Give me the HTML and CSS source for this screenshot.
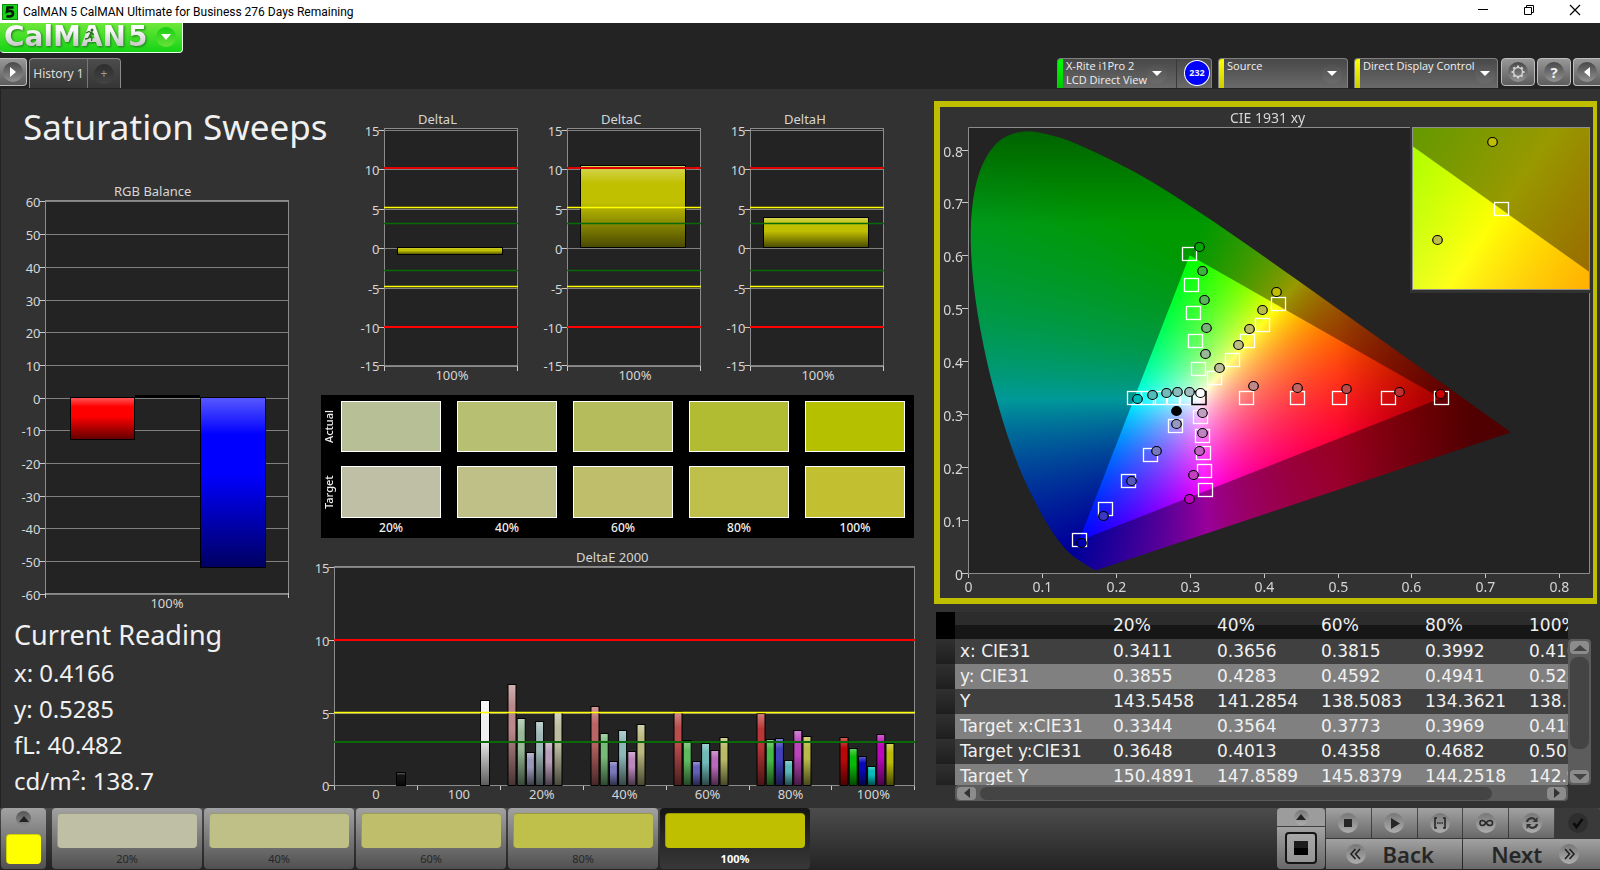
FILE: index.html
```html
<!DOCTYPE html>
<html lang="en">
<head>
<meta charset="utf-8">
<title>CalMAN 5</title>
<link rel="stylesheet" href="styles.css">
</head>
<body>
<header class="titlebar">
  <svg class="app-icon" viewBox="0 0 16 16" aria-hidden="true"><rect width="16" height="16" fill="#0a8f0a"/><rect x="1" y="1" width="14" height="14" fill="#19d219"/><path d="M11.5 3.5H5.5L5 7.5C7 6.500 11 6.500 11 9.500C11 12.500 7 13 4.500 12" fill="none" stroke="#021a02" stroke-width="2.600"/></svg>
  <span class="window-title">CalMAN 5 CalMAN Ultimate for Business 276 Days Remaining</span>
  <div class="window-controls">
    <button class="win-btn" aria-label="Minimize"><svg width="12" height="12"><path d="M1 5.5H11" stroke="#000"/></svg></button>
    <button class="win-btn" aria-label="Restore"><svg width="12" height="12"><path d="M1.5 3.500H8.500V10.500H1.500ZM3.500 3.500V1.500H10.500V8.500H8.500" fill="none" stroke="#000"/></svg></button>
    <button class="win-btn" aria-label="Close"><svg width="12" height="12"><path d="M1 1L11 11M11 1L1 11" stroke="#000" stroke-width="1.200"/></svg></button>
  </div>
</header>

<div class="topbar">
  <button class="logo" aria-label="CalMAN 5 menu"><span class="logo-text">CalMAN</span><span class="logo-text logo-five">5</span><span class="logo-drop"><svg width="12" height="8"><path d="M1 1H11L6 7Z" fill="#fff"/></svg></span>
    <svg class="runner" viewBox="0 0 12 14" aria-hidden="true"><circle cx="8" cy="2" r="1.500" fill="#2a6a20"/><path d="M2 5L5 3.500L7.500 5L10 6.500M7 4.500L5.500 8L8 10L7.500 13M5.500 8L4 10.500L1 11" fill="none" stroke="#2a6a20" stroke-width="1.300"/></svg>
  </button>
  <div class="tabrow">
    <button class="grey-btn play-btn" aria-label="Expand"><span class="knob"><svg width="8" height="12"><path d="M1 1L7 6L1 11Z" fill="#fff"/></svg></span></button>
    <div class="history">
      <button class="tab">History 1</button>
      <button class="tab tab-add" aria-label="Add tab"><span class="knob knob-dark">+</span></button>
    </div>
    <div class="devices">
      <div class="device device-meter"><i class="flag flag-green"></i><span class="device-name">X-Rite i1Pro 2<br>LCD Direct View</span><button class="knob knob-drop" aria-label="Meter menu"><svg width="12" height="8"><path d="M1 1H11L6 6Z" fill="#fff"/></svg></button><i class="device-split"></i><span class="count">232</span></div>
      <div class="device device-source"><i class="flag"></i><span class="device-name">Source</span><button class="knob knob-drop" aria-label="Source menu"><svg width="12" height="8"><path d="M1 1H11L6 6Z" fill="#fff"/></svg></button></div>
      <div class="device device-display"><i class="flag"></i><span class="device-name">Direct Display Control</span><button class="knob knob-drop" aria-label="Display menu"><svg width="12" height="8"><path d="M1 1H11L6 6Z" fill="#fff"/></svg></button></div>
      <button class="grey-btn" aria-label="Settings"><span class="knob"><svg width="16" height="16" viewBox="0 0 16 16"><circle cx="8" cy="8" r="4.500" fill="none" stroke="#d0d0d0" stroke-width="1.500"/><path d="M8 1.500V3.500M8 12.500V14.500M1.500 8H3.500M12.500 8H14.500M3.400 3.400L4.800 4.800M11.200 11.200L12.600 12.600M12.600 3.400L11.200 4.800M4.800 11.200L3.400 12.600" stroke="#d0d0d0" stroke-width="2.200"/></svg></span></button>
      <button class="grey-btn" aria-label="Help"><span class="knob knob-help">?</span></button>
      <button class="grey-btn collapse-btn" aria-label="Collapse"><span class="knob"><svg width="8" height="12"><path d="M7 1L1 6L7 11Z" fill="#fff"/></svg></span></button>
    </div>
  </div>
</div>

<main class="workspace">
  <section class="col-left">
    <h1 class="page-title">Saturation Sweeps</h1>
    <svg class="chart" id="rgb" viewBox="0 180 320 435" role="img" aria-label="RGB Balance"></svg>
    <div class="reading">
      <h2>Current Reading</h2>
      <p>x: 0.4166</p>
      <p>y: 0.5285</p>
      <p>fL: 40.482</p>
      <p>cd/m²: 138.7</p>
    </div>
  </section>

  <section class="col-mid">
    <div class="deltas">
      <svg class="chart" id="deltaL" viewBox="335 105 183 285" role="img" aria-label="DeltaL"></svg>
      <svg class="chart" id="deltaC" viewBox="335 105 183 285" role="img" aria-label="DeltaC"></svg>
      <svg class="chart" id="deltaH" viewBox="335 105 183 285" role="img" aria-label="DeltaH"></svg>
    </div>
    <div class="swatches">
      <span class="side">Actual</span>
      <i class="sw a20"></i><i class="sw a40"></i><i class="sw a60"></i><i class="sw a80"></i><i class="sw a100"></i>
      <span class="side">Target</span>
      <i class="sw t20"></i><i class="sw t40"></i><i class="sw t60"></i><i class="sw t80"></i><i class="sw t100"></i>
      <span></span><b>20%</b><b>40%</b><b>60%</b><b>80%</b><b>100%</b>
    </div>
    <svg class="chart chart-de" id="deltaE" viewBox="320 545 600 263" role="img" aria-label="DeltaE 2000"></svg>
  </section>

  <section class="col-right">
    <div class="cie">
      <canvas class="cie-fill" id="cieFill" width="1306" height="982"></canvas>
      <svg class="chart cie-chart" id="cie" viewBox="940 107 653 491" role="img" aria-label="CIE 1931 xy"></svg>
    </div>
    <div class="grid-box">
      <div class="grid-view">
        <table>
          <thead><tr><th class="rowhead"></th><th class="name"></th><th>20%</th><th>40%</th><th>60%</th><th>80%</th><th>100%</th></tr></thead>
          <tbody>
            <tr><td class="rowhead"></td><td>x: CIE31</td><td>0.3411</td><td>0.3656</td><td>0.3815</td><td>0.3992</td><td>0.4166</td></tr>
            <tr><td class="rowhead"></td><td>y: CIE31</td><td>0.3855</td><td>0.4283</td><td>0.4592</td><td>0.4941</td><td>0.5285</td></tr>
            <tr><td class="rowhead"></td><td>Y</td><td>143.5458</td><td>141.2854</td><td>138.5083</td><td>134.3621</td><td>138.7000</td></tr>
            <tr><td class="rowhead"></td><td>Target x:CIE31</td><td>0.3344</td><td>0.3564</td><td>0.3773</td><td>0.3969</td><td>0.4193</td></tr>
            <tr><td class="rowhead"></td><td>Target y:CIE31</td><td>0.3648</td><td>0.4013</td><td>0.4358</td><td>0.4682</td><td>0.5053</td></tr>
            <tr><td class="rowhead"></td><td>Target Y</td><td>150.4891</td><td>147.8589</td><td>145.8379</td><td>144.2518</td><td>142.9000</td></tr>
          </tbody>
        </table>
      </div>
      <div class="vbar">
        <button class="sbtn" aria-label="Scroll up"><svg width="16" height="8"><path d="M1 7H15L8 1Z" fill="#444"/></svg></button>
        <i class="vthumb"></i>
        <button class="sbtn" aria-label="Scroll down"><svg width="16" height="8"><path d="M1 1H15L8 7Z" fill="#444"/></svg></button>
      </div>
      <div class="hbar">
        <button class="sbtn" aria-label="Scroll left"><svg width="8" height="12"><path d="M7 1V11L1 6Z" fill="#333"/></svg></button>
        <i class="hthumb"></i>
        <button class="sbtn" aria-label="Scroll right"><svg width="8" height="12"><path d="M1 1V11L7 6Z" fill="#333"/></svg></button>
      </div>
    </div>
  </section>
</main>

<footer class="bottombar">
  <button class="patch patch-current" aria-label="Current colour"><span class="knob-mini"><svg width="10" height="6"><path d="M5 0L10 6H0Z" fill="#222"/></svg></span><i class="patch-color yellow"></i></button>
  <button class="patch"><i class="patch-color t20"></i>20%</button>
  <button class="patch"><i class="patch-color t40"></i>40%</button>
  <button class="patch"><i class="patch-color t60"></i>60%</button>
  <button class="patch"><i class="patch-color t80"></i>80%</button>
  <button class="patch patch-on"><i class="patch-color full"></i>100%</button>
  <div class="controls">
    <div class="mode">
      <button class="ctl mode-up" aria-label="Mode menu"><span class="knob-lite knob-small"><svg width="10" height="6"><path d="M5 0L10 6H0Z" fill="#222"/></svg></span></button>
      <button class="ctl mode-box" aria-label="Pattern window"><i class="pattern"></i></button>
    </div>
    <div class="transport">
      <button class="ctl" aria-label="Stop"><span class="knob-lite"><svg width="20" height="20"><path d="M6 6H14V14H6Z" fill="#262626"/></svg></span></button>
      <button class="ctl" aria-label="Play"><span class="knob-lite"><svg width="20" height="20"><path d="M7 5L16 10.500L7 16Z" fill="#262626"/></svg></span></button>
      <button class="ctl" aria-label="Read series"><span class="knob-lite"><svg width="20" height="20"><path d="M7 5H5V15H7M13 5H15V15H13" fill="none" stroke="#262626" stroke-width="1.600"/><path d="M7 10H13" stroke="#262626" stroke-width="1.600" stroke-dasharray="1.500 .7"/></svg></span></button>
      <button class="ctl" aria-label="Continuous"><span class="knob-lite"><svg width="20" height="20"><path d="M10 10C8 7 4 6.500 4 10C4 13.500 8 13 10 10C12 7 16.500 6.500 16.500 10C16.500 13.500 12 13 10 10Z" fill="none" stroke="#262626" stroke-width="1.600"/></svg></span></button>
      <button class="ctl" aria-label="Refresh"><span class="knob-lite"><svg width="20" height="20"><path d="M5 9C5.500 5.500 10 4 13 6.500M15 11C14.500 14.500 10 16 7 13.500" fill="none" stroke="#333" stroke-width="2.200"/><path d="M15.500 4V9H10.500ZM4.500 16V11H9.500Z" fill="#333"/></svg></span></button>
      <button class="ctl ctl-off" aria-label="Accept"><span class="knob-lite knob-off"><svg width="20" height="20"><path d="M5.500 10L8.500 14L14.500 6" fill="none" stroke="#0c0c0c" stroke-width="2.800"/></svg></span></button>
      <button class="ctl nav nav-back"><span class="knob-lite"><svg width="20" height="20"><path d="M9.500 5L5 10L9.500 15M14 5L9.500 10L14 15" fill="none" stroke="#222" stroke-width="1.600"/></svg></span>Back</button>
      <button class="ctl nav nav-next">Next<span class="knob-lite"><svg width="20" height="20"><path d="M6 5L10.500 10L6 15M10.500 5L15 10L10.500 15" fill="none" stroke="#222" stroke-width="1.600"/></svg></span></button>
    </div>
  </div>
</footer>
<script src="charts.js"></script>
</body>
</html>
```
FILE: styles.css
```css
* { box-sizing: border-box; }
body {
  margin: 0;
  min-height: 100vh;
  display: flex;
  flex-direction: column;
  background: #323232;
  color: #f0f0f0;
  font-family: "Noto Sans", "Open Sans", sans-serif;
  font-size: 13px;
}
button {
  border: 0;
  padding: 0;
  margin: 0;
  background: none;
  color: inherit;
  font: inherit;
  display: flex;
  align-items: center;
  justify-content: center;
}
i { font-style: normal; display: block; }
svg { display: block; }

.titlebar {
  height: 23px;
  display: flex;
  align-items: center;
  background: #fff;
  color: #000;
  padding-left: 2px;
}
.app-icon { width: 16px; height: 16px; }
.window-title { margin-left: 5px; font-size: 12px; line-height: 16px; font-family: Roboto, "Open Sans", sans-serif; }
.window-controls { margin-left: auto; display: flex; padding-right: 2px; }
.win-btn { width: 46px; height: 23px; padding-bottom: 3px; }

.topbar { background: #232323; height: 66px; display: flex; flex-direction: column; }
.logo {
  position: relative;
  width: 183px;
  height: 30px;
  justify-content: flex-start;
  padding: 0 0 2px 4px;
  background: linear-gradient(#6fe83a, #14d414);
  border: 1px solid #eaffea;
  border-top: 0;
  border-left: 0;
  border-radius: 0 0 4px 4px;
}
.logo-text {
  font-family: "DejaVu Sans", sans-serif;
  font-weight: 700;
  font-size: 28px;
  line-height: 28px;
  background: linear-gradient(#ffffff 20%, #c4c4c4 85%);
  background-clip: text;
  color: transparent;
  filter: drop-shadow(1px 1px 1px #1b7a1b);
}
.logo-five { margin-left: 2px; }
.runner { position: absolute; left: 84px; top: 5px; width: 12px; height: 14px; }
.logo-drop {
  display: flex;
  align-items: center;
  justify-content: center;
  width: 20px;
  height: 20px;
  margin-left: 8px;
  border-radius: 50%;
  background: linear-gradient(#13cf13, #6ae23a);
}
.tabrow { display: flex; padding-top: 5px; }
.grey-btn {
  width: 34px;
  height: 28px;
  background: linear-gradient(#989898, #5c5c5c);
  border: 1px solid #bdbdbd;
  border-radius: 4px;
}
.play-btn { width: 27px; border-left: 0; border-radius: 0 4px 4px 0; }
.knob {
  display: flex;
  align-items: center;
  justify-content: center;
  width: 20px;
  height: 20px;
  border-radius: 50%;
  background: linear-gradient(#484848, #929292);
}
.knob-dark { background: linear-gradient(#2d2d2d, #454545); color: #9a9a9a; font-size: 12px; }
.knob-help { font-weight: 700; font-size: 15px; color: #eee; }
.history {
  display: flex;
  height: 30px;
  margin-left: 2px;
  border: 1px solid #8a8a8a;
  border-bottom: 0;
  border-radius: 4px 4px 0 0;
  background: linear-gradient(#4c4c4c, #363636);
}
.tab { width: 57px; font-size: 12px; color: #dcdcdc; }
.tab-add { width: 33px; border-left: 1px solid #777; }
.devices { margin-left: auto; display: flex; gap: 2px; }
.device {
  display: flex;
  height: 30px;
  margin-right: 4px;
  background: linear-gradient(#484848, #6a6a6a);
  border: 1px solid #808080;
  border-bottom: 0;
  border-radius: 4px 4px 0 0;
  overflow: hidden;
}
.device-meter { width: 155px; margin-right: 4px; }
.device-source { width: 130px; }
.device-display { width: 144px; margin-right: 1px; }
.flag { flex: none; width: 5px; background: linear-gradient(#ffff00, #cccc00); }
.flag-green { background: linear-gradient(#00ff00, #00c800); }
.device-name {
  padding-left: 3px;
  font-family: "Open Sans", sans-serif;
  font-size: 11px;
  line-height: 14px;
  white-space: nowrap;
}
.knob-drop { flex: none; width: 20px; margin: 5px 5px 0 auto; background: linear-gradient(#505050, #6c6c6c); }
.device-meter .knob-drop { margin-right: 9px; }
.device-split { width: 1px; background: #3a3a3a; }
.count {
  width: 26px;
  height: 26px;
  margin: 1px 1px 0 7px;
  border: 1px solid #fff;
  border-radius: 50%;
  background: #0000ff;
  font-size: 9px;
  font-weight: 700;
  line-height: 24px;
  text-align: center;
}
.collapse-btn { border-right: 0; border-radius: 4px 0 0 4px; width: 27px; }

.workspace {
  flex: 1;
  display: grid;
  grid-template-columns: 320fr 600fr 680fr;
  box-shadow: inset 1px 0 #232323;
  align-items: start;
}
.workspace > section { min-width: 0; }
.chart { width: 100%; height: auto; overflow: visible; }
.chart text { font-size: 13px; fill: #d6d6d6; }
.cie-chart .tick { font-size: 14px; }
.page-title {
  margin: 0;
  padding: 16px 0 31px 23px;
  font-size: 35px;
  font-weight: 400;
  line-height: 44px;
  white-space: nowrap;
}
.reading { padding: 0 0 0 14px; }
.reading h2 { margin: 0; font-size: 27px; font-weight: 400; line-height: 40px; }
.reading p { margin: 0; font-size: 24px; line-height: 36px; }

.deltas { display: grid; grid-template-columns: repeat(3, 1fr); padding: 16px 36px 5px 15px; }
.swatches {
  display: grid;
  grid-template-columns: 4px repeat(5, 1fr);
  grid-template-rows: 51px 52px 16px;
  gap: 14px 16px;
  height: 143px;
  margin: 0 6px 7px 1px;
  padding: 6px 9px 0 0;
  background: #000;
}
.swatches b { font-size: 12px; font-weight: 500; line-height: 16px; text-align: center; margin-top: -12px; }
.side { width: 16px; font-size: 11px; font-weight: 500; line-height: 16px; text-align: center; writing-mode: vertical-rl; transform: rotate(180deg); }
.sw { border: 1px solid #fff; }
.a20 { background: #b7bf96; }
.a40 { background: #b7bf73; }
.a60 { background: #b5bc5c; }
.a80 { background: #b1bc32; }
.a100 { background: #b5c000; }
.t20 { background: #bfbfa5; }
.t40 { background: #bfbf88; }
.t60 { background: #bfbf6b; }
.t80 { background: #bfbf4c; }
.t100 { background: #c2c030; }
.full { background: #bfbf00; }
.yellow { background: #ffff00; }

.cie {
  position: relative;
  margin: 12px 3px 0 14px;
  border: 6px solid #bfbf00;
  border-right-width: 4px;
  background: #323232;
}
.cie-fill { position: absolute; left: 0; top: 0; width: 100%; height: 100%; }
.cie-chart { position: relative; }

.grid-box {
  display: grid;
  grid-template-columns: 19px 1fr 23px;
  grid-template-rows: 173px 16px;
  margin: 8px 9px 0 16px;
}
.grid-view { grid-column: 1 / 3; overflow: hidden; }
table { border-collapse: collapse; table-layout: fixed; width: 697px; font-family: "DejaVu Sans", "Noto Sans", sans-serif; font-size: 17px; }
th, td { width: 104px; height: 25px; padding: 0; text-align: left; font-weight: 400; line-height: 25px; white-space: nowrap; }
th { height: 27px; line-height: 27px; background: linear-gradient(#2c2c2c 48%, #161616 49%); }
.name { width: 158px; }
.rowhead { width: 19px; background: linear-gradient(#303030, #1e1e1e); }
th.rowhead { background: #000; }
td:nth-child(2) { padding-left: 5px; }
tbody tr { background: #404040; }
tbody tr:nth-child(even) { background: #808080; }
.vbar {
  display: flex;
  flex-direction: column;
  align-items: center;
  gap: 3px;
  margin-top: 27px;
  padding: 2px;
  background: #5c5c5c;
  border-radius: 4px;
}
.sbtn { flex: none; width: 19px; height: 13px; background: #8c8c8c; border-radius: 4px; }
.vthumb { width: 19px; height: 92px; background: #444; border-radius: 8px; margin-bottom: auto; }
.hbar {
  grid-column: 2;
  display: flex;
  align-items: center;
  gap: 4px;
  padding: 0 2px;
  background: #5c5c5c;
  border-radius: 4px;
}
.hthumb { width: 84%; height: 13px; background: #444; border-radius: 8px; margin-right: auto; }

.bottombar {
  height: 62px;
  display: flex;
  gap: 2px;
  padding-left: 1px;
  background: linear-gradient(#4c4c4c, #232323);
}
.patch {
  width: 150px;
  height: 61px;
  flex-direction: column;
  justify-content: flex-start;
  padding: 5px 5px 0;
  border-radius: 4px;
  background: linear-gradient(#a2a2a2, #505050);
  color: #262626;
  font-size: 11px;
  line-height: 20px;
}
.patch-color { width: 100%; height: 36px; border-radius: 4px; border: 1px solid rgba(0, 0, 0, .18); border-right: 0; border-bottom: 0; margin-bottom: 1px; }
.patch-current { width: 45px; margin-right: 4px; padding-top: 3px; gap: 4px; }
.patch-current .patch-color { width: 35px; height: 30px; margin-top: 4px; }
.knob-mini { display: flex; align-items: center; justify-content: center; width: 15px; height: 15px; border-radius: 50%; background: linear-gradient(#555, #8c8c8c); }
.patch-on { background: linear-gradient(#151515, #383838); color: #fff; font-weight: 700; }
.controls { margin-left: auto; display: flex; gap: 1px; }
.mode { display: flex; flex-direction: column; gap: 1px; width: 48px; height: 61px; }
.ctl { background: linear-gradient(#a2a2a2, #686868); color: #262626; }
.mode-up { height: 18px; border-radius: 4px 4px 0 0; background: #9c9c9c; }
.mode-box { flex: 1; border-radius: 0 0 4px 4px; }
.pattern {
  width: 32px;
  height: 32px;
  border: 2px solid #151515;
  border-radius: 4px;
  background: linear-gradient(#1c1c1c 50%, #000 50%) center / 14px 14px no-repeat, linear-gradient(#a8a8a8, #949494);
}
.transport {
  width: 274px;
  height: 61px;
  display: grid;
  grid-template-columns: repeat(6, 1fr);
  grid-template-rows: 30px 30px;
  gap: 1px;
}
.nav { grid-column: span 3; gap: 17px; font-size: 22px; font-weight: 600; line-height: 28px; }
.nav-back { padding-right: 9px; }
.nav-next { padding-left: 7px; }
.knob-lite { display: flex; width: 20px; height: 20px; border-radius: 50%; background: linear-gradient(#777, #aeaeae); align-items: center; justify-content: center; }
.knob-small { width: 15px; height: 15px; }
.ctl-off { background: #3a3a3a; border-radius: 0 4px 0 0; }
.knob-off { background: #2e2e2e; }
```
FILE: charts.js
```js
const NS = 'http://www.w3.org/2000/svg';

function add(parent, name, attrs, text) {
  const el = document.createElementNS(NS, name);
  for (const key in attrs) el.setAttribute(key, attrs[key]);
  if (text !== undefined) el.textContent = text;
  parent.appendChild(el);
  return el;
}

function addShade(svg, id) {
  const g = add(add(svg, 'defs', {}), 'linearGradient', { id, x1: 0, y1: 0, x2: 0, y2: 1 });
  [[0, '#fff', .35], [.22, '#fff', 0], [.45, '#000', 0], [1, '#000', .62]].forEach(s =>
    add(g, 'stop', { offset: s[0], 'stop-color': s[1], 'stop-opacity': s[2] }));
}

function bar(svg, x, y, w, h, color) {
  add(svg, 'rect', { x, y, width: w, height: h, fill: color });
  add(svg, 'rect', { x, y, width: w, height: h, fill: 'url(#' + svg.id + 'Shade)', stroke: '#000' });
}

/* Plot area with horizontal grid lines, ticks on the left and a title. */
function frame(svg, o) {
  addShade(svg, svg.id + 'Shade');
  add(svg, 'rect', { x: o.x0, y: o.top, width: o.x1 - o.x0, height: o.bottom - o.top, fill: '#232323' });
  add(svg, 'text', { x: o.titleX, y: o.titleY }, o.title);
  o.ticks.forEach(([label, y]) => {
    add(svg, 'line', { x1: o.x0 - 6, x2: o.x1, y1: y, y2: y, stroke: '#808080' });
    add(svg, 'line', { x1: o.x0 - 6, x2: o.x0, y1: y, y2: y, stroke: '#c8c8c8' });
    add(svg, 'text', { x: o.x0 - 5, y: y + 5, 'text-anchor': 'end' }, label);
  });
  add(svg, 'rect', { x: o.x0, y: o.top, width: o.x1 - o.x0, height: o.bottom - o.top, fill: 'none', stroke: '#8c8c8c' });
}

function limit(svg, x0, x1, y, color, w) {
  add(svg, 'line', { x1: x0, x2: x1, y1: y, y2: y, stroke: color, 'stroke-width': w || 1 });
}

/* RGB balance */
const rgb = document.getElementById('rgb');
const rgbTicks = [];
for (let v = 60; v >= -60; v -= 10) rgbTicks.push([v, Math.round(397.6 - v * 3.27) + .5]);
frame(rgb, { x0: 45.5, x1: 288.5, top: 200.5, bottom: 593.5, title: 'RGB Balance', titleX: 114, titleY: 196, ticks: rgbTicks });
bar(rgb, 70.5, 397.5, 64, 42, '#ff0000');
add(rgb, 'rect', { x: 135, y: 395, width: 65, height: 3, fill: '#000' });
bar(rgb, 200.5, 397.5, 65, 170, '#0000ff');
[45.5, 288.5].forEach(x => add(rgb, 'line', { x1: x, x2: x, y1: 593, y2: 598, stroke: '#c8c8c8' }));
add(rgb, 'text', { x: 167, y: 608, 'text-anchor': 'middle' }, '100%');

/* Delta L / C / H */
[['deltaL', 'DeltaL', 247.5, 7], ['deltaC', 'DeltaC', 165.5, 82], ['deltaH', 'DeltaH', 217.5, 30]].forEach(([id, title, y, h]) => {
  const svg = document.getElementById(id);
  frame(svg, {
    x0: 384.5, x1: 517.5, top: 128.5, bottom: 366.5, title, titleX: 418, titleY: 124,
    ticks: [[15, 130.5], [10, 169.5], [5, 209.5], [0, 248.5], [-5, 288.5], [-10, 327.5], [-15, 365.5]]
  });
  bar(svg, 397.5, y, 105, h, '#c0c000');
  limit(svg, 384, 518, 168, '#e00000', 2);
  limit(svg, 384, 518, 207.5, '#ffff00', 1.4);
  limit(svg, 384, 518, 223.5, '#0a6a0a', 1.4);
  limit(svg, 384, 518, 270.5, '#0a6a0a', 1.4);
  limit(svg, 384, 518, 286.5, '#ffff00', 1.4);
  limit(svg, 384, 518, 327, '#ff0000', 2);
  [384.5, 517.5].forEach(x => add(svg, 'line', { x1: x, x2: x, y1: 366, y2: 371, stroke: '#c8c8c8' }));
  add(svg, 'text', { x: 452, y: 380, 'text-anchor': 'middle' }, '100%');
});

/* Delta E 2000 */
const de = document.getElementById('deltaE');
frame(de, {
  x0: 334.5, x1: 914.5, top: 566.5, bottom: 785.5, title: 'DeltaE 2000', titleX: 576, titleY: 562,
  ticks: [[15, 567.5], [10, 640.5], [5, 713.5], [0, 785.5]]
});
bar(de, 396.5, 772.5, 9, 13, '#141414');
bar(de, 480.5, 700.5, 9, 85, '#f0f0f0');
const sweeps = [
  [508, [684, 718, 752, 721, 742, 712], ['#ba8888', '#98ba98', '#9898ba', '#a0b8b8', '#ba9fba', '#bcbc9f']],
  [591, [706, 733, 761, 730, 751, 724], ['#ba6565', '#78ba78', '#7878ba', '#8cb8b8', '#ba88ba', '#baba80']],
  [674, [711, 740, 761, 743, 750, 737], ['#ba4c4c', '#5fba5f', '#6060ba', '#70b9b9', '#ba6aba', '#baba68']],
  [757, [713, 739, 738, 760, 730, 736], ['#ba3535', '#44ba44', '#4040ba', '#58b9b9', '#ba44ba', '#baba4a']],
  [840, [737, 748, 756, 766, 734, 743], ['#ba0808', '#08ba08', '#0808ba', '#08baba', '#ba08ba', '#baba08']]
];
sweeps.forEach(([x, tops, colors]) => tops.forEach((y, i) => bar(de, x + i * 9.2, y + .5, 8, 785 - y, colors[i])));
limit(de, 334, 915, 640, '#ff0000', 2);
limit(de, 334, 915, 712.5, '#ffff00', 1.4);
limit(de, 334, 915, 742, '#0a6a0a', 2);
for (let i = 0; i <= 7; i++) {
  const x = Math.round(334 + i * 82.9) + .5;
  add(de, 'line', { x1: x, x2: x, y1: 786, y2: 790, stroke: '#c8c8c8' });
}
['0', '100', '20%', '40%', '60%', '80%', '100%'].forEach((t, i) =>
  add(de, 'text', { x: 376 + i * 82.9, y: 799, 'text-anchor': 'middle' }, t));

/* CIE 1931 diagram: page units, x 968 + 739 per unit, y 572.7 - 529 per unit */
const px = x => 968 + x * 739;
const py = y => 572.7 - y * 529;
const locus = [.1741, .005, .1714, .0051, .1644, .0109, .1566, .0177, .144, .0297, .1355, .0399, .1241, .0578, .1096, .0868,
  .0913, .1327, .0687, .2007, .0454, .295, .0235, .4127, .0082, .5384, .0039, .6548, .0139, .7502, .0389, .812, .0743, .8338,
  .1142, .8262, .1547, .8059, .2296, .7543, .3016, .6923, .3731, .6245, .4441, .5547, .5125, .4866, .5752, .4242, .627, .3725,
  .6658, .334, .6915, .3083, .719, .2809, .7347, .2653];

function xyColor(x, y) {
  const X = x / y, Z = (1 - x - y) / y;
  let c = [3.2406 * X - 1.5372 - .4986 * Z, -.9689 * X + 1.8758 + .0415 * Z, .0557 * X - .204 + 1.057 * Z].map(v => Math.max(0, v));
  const m = Math.max(...c);
  let dim = 1;
  if (x > .5) dim = Math.max(.52, 1 - (x - .5) * 2.6);
  if (y > .66) dim = 1 - (y - .66) * 2;
  return c.map(v => v / m * 255 * dim);
}

/* Fills a canvas with the colours of the region, scaled by level. */
function field(x0, y0, w, h, toX, toY, level) {
  const cv = document.createElement('canvas');
  cv.width = w * 2;
  cv.height = h * 2;
  const g = cv.getContext('2d');
  const img = g.createImageData(w * 2, h * 2);
  for (let j = 0, k = 0; j < h * 2; j++) {
    for (let i = 0; i < w * 2; i++) {
      const c = xyColor(toX(x0 + i / 2), Math.max(.002, toY(y0 + j / 2)));
      img.data[k++] = c[0] * level;
      img.data[k++] = c[1] * level;
      img.data[k++] = c[2] * level;
      img.data[k++] = 255;
    }
  }
  g.putImageData(img, 0, 0);
  return cv;
}

const ctx = document.getElementById('cieFill').getContext('2d');
ctx.scale(2, 2);
ctx.translate(-940, -107);
ctx.fillStyle = '#232323';
ctx.fillRect(968, 128, 621, 445);

function paint(path, x, y, w, h, toX, toY, level) {
  ctx.save();
  ctx.clip(path);
  ctx.drawImage(field(x, y, w, h, toX, toY, level), x, y, w, h);
  ctx.restore();
}

/* Smooth curve through every locus point, closed by the purple line. */
const shoe = new Path2D();
const pts = [];
for (let i = 0; i < locus.length; i += 2) pts.push([px(locus[i]), py(locus[i + 1])]);
shoe.moveTo(...pts[0]);
for (let i = 0; i < pts.length - 1; i++) {
  const a = pts[Math.max(0, i - 1)], b = pts[i], c = pts[i + 1], d = pts[Math.min(pts.length - 1, i + 2)];
  shoe.bezierCurveTo(b[0] + (c[0] - a[0]) / 6, b[1] + (c[1] - a[1]) / 6, c[0] - (d[0] - b[0]) / 6, c[1] - (d[1] - b[1]) / 6, c[0], c[1]);
}
shoe.closePath();

function gamut(fx, fy) {
  const p = new Path2D();
  p.moveTo(fx(.64), fy(.33));
  p.lineTo(fx(.3), fy(.6));
  p.lineTo(fx(.15), fy(.06));
  p.closePath();
  return p;
}

const ix = x => (x - 968) / 739, iy = y => (572.7 - y) / 529;
paint(shoe, 968, 128, 560, 445, ix, iy, .6);
paint(gamut(px, py), 968, 128, 560, 445, ix, iy, 1);

/* Magnified view around the 100% yellow target */
const zx = x => 1501 + (x - .4193) * 3184, zy = y => 209 - (y - .5053) * 2850;
const zix = x => .4193 + (x - 1501) / 3184, ziy = y => .5053 - (y - 209) / 2850;
ctx.fillStyle = '#323232';
ctx.fillRect(1410, 126, 183, 167);
const box = new Path2D();
box.rect(1413, 128, 177, 162);
paint(box, 1413, 128, 177, 162, zix, ziy, .6);
ctx.save();
ctx.clip(box);
paint(gamut(zx, zy), 1413, 128, 177, 162, zix, ziy, 1);
ctx.restore();

const cie = document.getElementById('cie');
add(cie, 'path', { d: 'M1410 127.500H968.500V573.500H1589.500V293', fill: 'none', stroke: '#8c8c8c' });
add(cie, 'rect', { x: 1412.5, y: 127.5, width: 177, height: 162, fill: 'none', stroke: '#909090' });
add(cie, 'text', { x: 1230, y: 123, class: 'tick' }, 'CIE 1931 xy');
for (let i = 0; i <= 8; i++) {
  const label = i ? '0.' + i : '0';
  const x = Math.round(px(i / 10)) + .5, y = Math.round(py(i / 10)) + .5;
  add(cie, 'line', { x1: x, x2: x, y1: 574, y2: 578, stroke: '#c8c8c8' });
  add(cie, 'line', { x1: 962, x2: 968, y1: y, y2: y, stroke: '#c8c8c8' });
  add(cie, 'text', { x, y: 592, 'text-anchor': 'middle', class: 'tick' }, label);
  add(cie, 'text', { x: 963, y: y + 6, 'text-anchor': 'end', class: 'tick' }, label);
}

const targets = [[1189, 254], [1191, 285], [1193, 313], [1195, 341], [1198, 369], [1214, 378], [1232, 360], [1247, 341],
  [1262, 325], [1278, 304], [1246, 398], [1297, 398], [1339, 398], [1388, 398], [1441, 398], [1134, 398], [1148, 398],
  [1160, 398], [1173, 398], [1186, 398], [1175, 426], [1150, 455], [1128, 481], [1105, 509], [1079, 540], [1200, 417],
  [1202, 436], [1203, 453], [1204, 471], [1205, 490], [1501, 209]];
targets.forEach(([x, y]) => add(cie, 'rect', { x: x - 6.5, y: y - 6.5, width: 14, height: 13, fill: 'none', stroke: '#fff', 'stroke-width': 1.3 }));
add(cie, 'rect', { x: 1192, y: 391.5, width: 14, height: 13, fill: 'none', stroke: '#000', 'stroke-width': 1.5 });

const readings = [[1199, 247, '#00a800'], [1202, 271, '#3cb43c'], [1204, 300, '#5ab45a'], [1206, 328, '#78b478'], [1205, 354, '#96b896'],
  [1219, 368, '#bcbc9c'], [1238, 345, '#bcbc84'], [1249, 329, '#bcbc68'], [1262, 310, '#bcbc48'], [1276, 292, '#bfbf00'],
  [1253, 386, '#c08888'], [1297, 388, '#c06464'], [1346, 389, '#c04848'], [1399, 392, '#c03030'], [1440, 394, '#d00000'],
  [1137, 399, '#00bcbc'], [1152, 395, '#50bcbc'], [1166, 393, '#70bcbc'], [1177, 392, '#88bcbc'], [1189, 392, '#a0bcbc'],
  [1200, 393, '#ffffff'], [1176, 411, '#000000'], [1176, 424, '#9898c0'], [1156, 451, '#7878c0'], [1131, 481, '#5858c0'],
  [1103, 516, '#3838c0'], [1081, 543, '#0000b0'], [1202, 413, '#c0a0c0'], [1202, 433, '#c084c0'], [1199, 451, '#c060c0'],
  [1193, 475, '#c040c0'], [1189, 499, '#c000c0'], [1492, 142, '#bfbf00'], [1437, 240, '#bfbf48']];
readings.forEach(([cx, cy, fill]) => add(cie, 'ellipse', { cx: cx + .5, cy, rx: 4.8, ry: 4.5, fill, stroke: '#000', 'stroke-width': 1.2 }));
```
